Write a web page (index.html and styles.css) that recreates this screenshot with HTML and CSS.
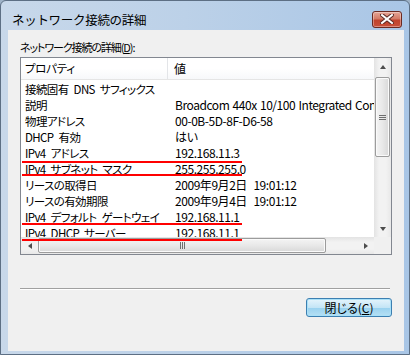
FILE: index.html
```html
<!DOCTYPE html>
<html lang="ja">
<head>
<meta charset="utf-8">
<title>ネットワーク接続の詳細</title>
<link rel="stylesheet" href="styles.css">
</head>
<body>
<div class="window">
  <div class="titlebar">
    <span class="title">ネットワーク接続の詳細</span>
    <div class="close">
      <svg width="14" height="10" viewBox="0 0 14 10"><path d="M2 1 L12 9 M12 1 L2 9" stroke="#5a2a25" stroke-width="4" stroke-linecap="square"/><path d="M2 1 L12 9 M12 1 L2 9" stroke="#ffffff" stroke-width="2" stroke-linecap="square"/></svg>
    </div>
  </div>
  <div class="client">
    <div class="label">ネットワーク接続の詳細(<u>D</u>):</div>
    <div class="listbox">
      <div class="viewport">
        <div class="header">
          <div class="hcell c1">プロパティ</div>
          <div class="hcell c2">値</div>
        </div>
        <div class="rows">
          <div class="row"><span class="c1">接続固有 DNS サフィックス</span><span class="c2"></span></div>
          <div class="row"><span class="c1">説明</span><span class="c2">Broadcom 440x 10/100 Integrated Controller</span></div>
          <div class="row"><span class="c1">物理アドレス</span><span class="c2">00-0B-5D-8F-D6-58</span></div>
          <div class="row"><span class="c1">DHCP 有効</span><span class="c2">はい</span></div>
          <div class="row"><span class="c1">IPv4 アドレス</span><span class="c2">192.168.11.3</span></div>
          <div class="row"><span class="c1">IPv4 サブネット マスク</span><span class="c2">255.255.255.0</span></div>
          <div class="row"><span class="c1">リースの取得日</span><span class="c2">2009年9月2日  19:01:12</span></div>
          <div class="row"><span class="c1">リースの有効期限</span><span class="c2">2009年9月4日  19:01:12</span></div>
          <div class="row"><span class="c1">IPv4 デフォルト ゲートウェイ</span><span class="c2">192.168.11.1</span></div>
          <div class="row"><span class="c1">IPv4 DHCP サーバー</span><span class="c2">192.168.11.1</span></div>
          <div class="row"><span class="c1">IPv4 DNS サーバー</span><span class="c2">192.168.11.1</span></div>
        </div>
      </div>
      <div class="vscroll">
        <div class="sbtn"><span class="tri up"></span></div>
        <div class="vtrack"><div class="vthumb"><span class="grip-v"></span></div></div>
        <div class="sbtn"><span class="tri down"></span></div>
      </div>
      <div class="hscroll">
        <div class="sbtn"><span class="tri left"></span></div>
        <div class="htrack"><div class="hthumb"><span class="grip-h"></span></div></div>
        <div class="sbtn"><span class="tri right"></span></div>
      </div>
      <div class="corner"></div>
      <div class="mark mark1"></div>
      <div class="mark mark2"></div>
      <div class="mark mark3"></div>
      <div class="mark mark4"></div>
    </div>
    <div class="sep"></div>
    <div class="btnrow">
      <div class="btn">閉じる(<u>C</u>)</div>
    </div>
  </div>
</div>
</body>
</html>
```

FILE: styles.css
```css
html, body {
  margin: 0;
  padding: 0;
  background: #9fb3c8;
}
body {
  font-family: "Noto Sans CJK JP", "Noto Sans", sans-serif;
  font-size: 12px;
  color: #000;
}
.window {
  width: 410px;
  height: 355px;
  box-sizing: border-box;
  border: 1px solid #5d6f84;
  border-radius: 6px 6px 0 0;
  background: linear-gradient(90deg, #c8d8ea 0%, #bcd1e8 45%, #a9c6e6 100%);
  display: flex;
  flex-direction: column;
}
.titlebar {
  height: 29px;
  box-sizing: border-box;
  padding: 7px 7px 0 11px;
  display: flex;
  align-items: center;
  justify-content: space-between;
}
.title {
  font-size: 12.5px;
  color: #000;
  letter-spacing: -0.3px;
}
.close {
  width: 30px;
  height: 17px;
  box-sizing: border-box;
  border: 1px solid #6b2a22;
  border-radius: 3px;
  background: linear-gradient(180deg, #e5a596 0%, #d47a66 45%, #c0432d 55%, #c8503a 100%);
  display: flex;
  align-items: center;
  justify-content: center;
  box-shadow: inset 0 0 0 1px rgba(255,255,255,0.35);
}
.close svg { display: block; }
.client {
  margin-left: 7px;
  width: 396px;
  height: 321px;
  background: #f0f0f0;
  box-sizing: border-box;
  padding: 9px 12px 0 12px;
  display: flex;
  flex-direction: column;
}
.label {
  height: 16px;
  line-height: 16px;
  font-size: 11px;
  font-feature-settings: "palt";
  letter-spacing: -1.1px;
}
.label u { text-decoration: underline; }
.listbox {
  margin-top: 2px;
  width: 372px;
  height: 198px;
  box-sizing: border-box;
  border: 1px solid #828790;
  background: #fff;
  position: relative;
  display: grid;
  grid-template-columns: 353px 17px;
  grid-template-rows: 179px 17px;
}
.viewport {
  overflow: hidden;
  grid-column: 1;
  grid-row: 1;
}
.header {
  height: 22px;
  display: flex;
  background: linear-gradient(180deg, #ffffff 0%, #ffffff 50%, #f7f8fa 100%);
  border-bottom: 1px solid #e5e5e5;
  box-sizing: border-box;
}
.hcell {
  line-height: 21px;
  white-space: nowrap;
  font-feature-settings: "palt";
}
.hcell.c1 {
  width: 147px;
  padding-left: 4px;
  box-sizing: border-box;
  border-right: 1px solid #e3e5e8;
  font-size: 11.5px;
  letter-spacing: -0.3px;
}
.hcell.c2 {
  padding-left: 6px;
}
.rows {
  padding-top: 1px;
}
.row {
  height: 16px;
  line-height: 16px;
  display: flex;
  white-space: pre;
}
.row .c1 {
  width: 148px;
  flex: none;
  padding-left: 4px;
  box-sizing: border-box;
  font-size: 11.5px;
  font-feature-settings: "palt";
  letter-spacing: -0.6px;
  word-spacing: 3px;
  overflow: hidden;
}
.row .c2 {
  padding-left: 6px;
  letter-spacing: -0.45px;
  word-spacing: 1px;
}
.vscroll {
  grid-column: 2;
  grid-row: 1;
  display: flex;
  flex-direction: column;
  background: linear-gradient(90deg, #e3e3e3 0%, #f2f2f2 30%, #f2f2f2 70%, #e8e8e8 100%);
}
.hscroll {
  grid-column: 1;
  grid-row: 2;
  display: flex;
  background: linear-gradient(180deg, #e3e3e3 0%, #f2f2f2 30%, #f2f2f2 70%, #e8e8e8 100%);
}
.corner {
  grid-column: 2;
  grid-row: 2;
  background: #f0f0f0;
}
.sbtn {
  width: 17px;
  height: 17px;
  flex: none;
  display: flex;
  align-items: center;
  justify-content: center;
}
.tri {
  width: 0;
  height: 0;
  border-style: solid;
}
.tri.up { border-width: 0 3.5px 4px 3.5px; border-color: transparent transparent #4d4d4d transparent; }
.tri.down { border-width: 4px 3.5px 0 3.5px; border-color: #4d4d4d transparent transparent transparent; }
.tri.left { border-width: 3.5px 4px 3.5px 0; border-color: transparent #4d4d4d transparent transparent; }
.tri.right { border-width: 3.5px 0 3.5px 4px; border-color: transparent transparent transparent #4d4d4d; }
.vtrack {
  flex: 1;
  padding: 2px 0 0 0;
  display: flex;
  flex-direction: column;
}
.vthumb {
  height: 80px;
  margin: 0 1px;
  box-sizing: border-box;
  border: 1px solid #9c9c9c;
  border-radius: 2px;
  background: linear-gradient(90deg, #f4f4f4 0%, #e8e8e8 50%, #d8d8d8 100%);
  box-shadow: inset 0 0 0 1px #fafafa;
  display: flex;
  align-items: center;
  justify-content: center;
}
.grip-v {
  width: 7px;
  height: 5px;
  border-top: 1px solid #6e6e6e;
  border-bottom: 1px solid #6e6e6e;
  box-sizing: border-box;
  background: linear-gradient(180deg, transparent 40%, #6e6e6e 40%, #6e6e6e 60%, transparent 60%);
}
.htrack {
  flex: 1;
  display: flex;
}
.hthumb {
  width: 288px;
  margin: 1px 0;
  box-sizing: border-box;
  border: 1px solid #9c9c9c;
  border-radius: 2px;
  background: linear-gradient(180deg, #f4f4f4 0%, #e8e8e8 50%, #d8d8d8 100%);
  box-shadow: inset 0 0 0 1px #fafafa;
  display: flex;
  align-items: center;
  justify-content: center;
}
.grip-h {
  width: 5px;
  height: 7px;
  border-left: 1px solid #6e6e6e;
  border-right: 1px solid #6e6e6e;
  box-sizing: border-box;
  background: linear-gradient(90deg, transparent 40%, #6e6e6e 40%, #6e6e6e 60%, transparent 60%);
}
.mark {
  position: absolute;
  left: 1px;
  width: 220px;
  height: 2px;
  background: #ff0000;
}
.mark1 { top: 103px; }
.mark2 { top: 116px; }
.mark3 { top: 165px; }
.mark4 { top: 181px; }
.sep {
  margin-top: 33px;
  width: 370px;
  height: 1px;
  background: #a0a0a0;
  box-shadow: 0 1px 0 #ffffff;
}
.btnrow {
  margin-top: 9px;
  display: flex;
  justify-content: flex-end;
}
.btn {
  width: 86px;
  height: 19px;
  box-sizing: border-box;
  border: 1px solid #3c7fb1;
  border-radius: 3px;
  background: linear-gradient(180deg, #e5f4fc 0%, #c4e5f6 50%, #98d1ef 51%, #b6e0f4 100%);
  box-shadow: inset 0 0 0 1px #a8e0f8;
  display: flex;
  align-items: center;
  justify-content: center;
  line-height: 17px;
  font-feature-settings: "palt";
}
```
